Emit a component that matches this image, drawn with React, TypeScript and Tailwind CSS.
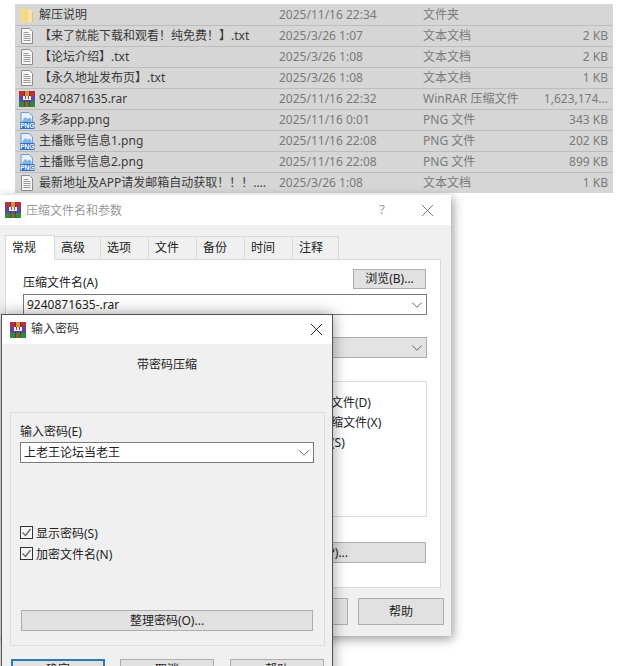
import { ChevronDown, X } from "lucide-react";

const FONT = { fontFamily: '"Noto Sans", "Noto Sans CJK SC", sans-serif' };

type Kind = "folder" | "txt" | "rar" | "png";

const files: { name: string; date: string; type: string; size: string; kind: Kind }[] = [
  { name: "解压说明", date: "2025/11/16 22:34", type: "文件夹", size: "", kind: "folder" },
  { name: "【来了就能下载和观看！纯免费！】.txt", date: "2025/3/26 1:07", type: "文本文档", size: "2 KB", kind: "txt" },
  { name: "【论坛介绍】.txt", date: "2025/3/26 1:08", type: "文本文档", size: "2 KB", kind: "txt" },
  { name: "【永久地址发布页】.txt", date: "2025/3/26 1:08", type: "文本文档", size: "1 KB", kind: "txt" },
  { name: "9240871635.rar", date: "2025/11/16 22:32", type: "WinRAR 压缩文件", size: "1,623,174...", kind: "rar" },
  { name: "多彩app.png", date: "2025/11/16 0:01", type: "PNG 文件", size: "343 KB", kind: "png" },
  { name: "主播账号信息1.png", date: "2025/11/16 22:08", type: "PNG 文件", size: "202 KB", kind: "png" },
  { name: "主播账号信息2.png", date: "2025/11/16 22:08", type: "PNG 文件", size: "899 KB", kind: "png" },
  { name: "最新地址及APP请发邮箱自动获取！！！....", date: "2025/3/26 1:08", type: "文本文档", size: "1 KB", kind: "txt" },
];

const tabs = [
  { label: "高级", w: "w-[47px]" },
  { label: "选项", w: "w-[49px]" },
  { label: "文件", w: "w-[49px]" },
  { label: "备份", w: "w-[49px]" },
  { label: "时间", w: "w-[49px]" },
  { label: "注释", w: "w-[47px]" },
];

const RarIcon = () => (
  <svg width="16" height="16" viewBox="0 0 16 16" className="shrink-0">
    <rect x="0" y="0" width="16" height="5" fill="#b8303a" />
    <rect x="0" y="5" width="16" height="6" fill="#5a48a8" />
    <rect x="0" y="11" width="16" height="5" fill="#2f8a3f" />
    <rect x="5" y="0" width="1" height="16" fill="#3a2a3a" opacity="0.5" />
    <rect x="10" y="0" width="1" height="16" fill="#3a2a3a" opacity="0.5" />
    <rect x="6" y="0" width="4" height="5" fill="#d9913c" />
    <rect x="4" y="5" width="8" height="4" fill="#f4ecdc" />
    <rect x="6" y="5" width="1" height="3" fill="#7a5a3c" />
    <rect x="9" y="5" width="1" height="3" fill="#7a5a3c" />
    <rect x="6" y="11" width="4" height="5" fill="#7a6a2c" />
  </svg>
);

const FileIcon = ({ kind }: { kind: Kind }) => {
  if (kind === "folder") {
    return (
      <svg width="16" height="16" viewBox="0 0 16 16" className="shrink-0">
        <path d="M1 1.500h7l1 1v13H1z" fill="#f3d98b" />
        <path d="M9 2.500h4.500v13H9z" fill="#f7e3a3" />
        <path d="M13 5h.8v10.500H13z" fill="#e2bd5c" />
      </svg>
    );
  }
  if (kind === "txt") {
    return (
      <svg width="14" height="16" viewBox="0 0 14 16" className="ml-px mr-px shrink-0">
        <path d="M1.500.5h8l3 3v12h-11z" fill="#f7f7f7" stroke="#8c8c8c" />
        <path d="M3.500 4.500h5M3.500 6.500h7M3.500 8.500h7M3.500 10.500h7M3.500 12.500h7" stroke="#9a9a9a" />
      </svg>
    );
  }
  if (kind === "rar") return <RarIcon />;
  return (
    <svg width="16" height="17" viewBox="0 0 16 17" className="shrink-0">
      <path d="M2 .5h8l3.500 3.500v8H2z" fill="#e8f1fb" stroke="#6d9bd2" />
      <path d="M3.500 8l3-3 2 2 2-1.500 2 2V11h-9z" fill="#7fb0e6" />
      <rect x="1" y="10" width="14.500" height="7" fill="#2f73c2" />
      <text x="8.200" y="16" fontSize="6.500" fontWeight="700" fill="#fff" textAnchor="middle" fontFamily="Liberation Sans">
        PNG
      </text>
    </svg>
  );
};

const Check = () => (
  <span className="flex h-[13px] w-[13px] shrink-0 items-center justify-center border border-[#333] bg-[#f4f4f4]">
    <svg width="11" height="11" viewBox="0 0 11 11">
      <path d="M1.500 5.500l3 3 5-6.500" fill="none" stroke="#666" strokeWidth="1.300" />
    </svg>
  </span>
);

const Btn = ({ label, className }: { label: string; className: string }) => (
  <div className={`flex items-center justify-center border-[1.5px] border-[#adadad] bg-[#e1e1e1] text-[12px] text-[#222] ${className}`}>
    {label}
  </div>
);

export default function App() {
  return (
    <div className="relative h-[666px] w-[627px] overflow-hidden bg-white" style={FONT}>
      {/* explorer list */}
      <div className="ml-[15px] mt-[4px] w-[598px] bg-[#d6d6d6]">
        {files.map((f) => (
          <div key={f.name} className="flex h-[21px] items-center border-t border-[#bdbdbd] text-[12px] first:border-t-transparent">
            <div className="flex w-[264px] items-center pl-[4px]">
              <FileIcon kind={f.kind} />
              <span className="ml-[4px] whitespace-nowrap text-[#3a3a3a]">{f.name}</span>
            </div>
            <div className="w-[144px] whitespace-nowrap text-[#7a7a7a]">{f.date}</div>
            <div className="w-[116px] whitespace-nowrap text-[#7a7a7a]">{f.type}</div>
            <div className="w-[69px] whitespace-nowrap text-right text-[#7a7a7a]">{f.size}</div>
          </div>
        ))}
      </div>

      {/* archive name and parameters window */}
      <div className="absolute left-[-2px] top-[195px] h-[441px] w-[453px] bg-[#f0f0f0] shadow-[2px_3px_10px_rgba(0,0,0,0.4)]">
        <div className="flex h-[30px] items-center bg-white pl-[7px] pr-[13px]">
          <RarIcon />
          <span className="ml-[5px] pt-[2px] text-[12px] text-[#999]">压缩文件名和参数</span>
          <span className="ml-auto mr-[32px] text-[13px] text-[#999]">?</span>
          <X size={21} strokeWidth={1.1} className="text-[#777]" />
        </div>
        <div className="ml-[7px] mt-[9px] flex h-[25px] items-end text-[12px] text-[#222]">
          <div className="z-10 -mb-px flex h-[25px] w-[50px] items-center border border-b-0 border-[#d9d9d9] bg-white pl-[6px]">常规</div>
          {tabs.map((t) => (
            <div key={t.label} className={`-ml-px flex h-[23px] items-center border border-b-0 border-[#d9d9d9] bg-[#f0f0f0] pl-[6px] ${t.w}`}>
              {t.label}
            </div>
          ))}
        </div>
        <div className="ml-[7px] h-[329px] w-[436px] border border-[#d9d9d9] bg-white pl-[17px] pr-[13px] pt-[9px]">
          <div className="flex h-[24px] items-start justify-between">
            <span className="pt-[5px] text-[12px] leading-[18px] text-[#222]">压缩文件名(A)</span>
            <Btn label="浏览(B)..." className="mr-px h-[20px] w-[73px]" />
          </div>
          <div className="mt-px flex h-[21px] items-center justify-between border border-[#7a7a7a] bg-white pl-[3px] text-[12px] text-[#222]">
            9240871635-.rar
            <ChevronDown size={18} strokeWidth={1.2} className="text-[#555]" />
          </div>
          <div className="mt-[22px] flex h-[21px] items-center justify-end border border-[#adadad] bg-[#e3e3e3]">
            <ChevronDown size={18} strokeWidth={1.2} className="text-[#555]" />
          </div>
          <div className="mt-[23px] flex h-[136px] flex-col gap-[2px] border border-[#dcdcdc] pl-[211px] pt-[12px] text-[12px] text-[#222]">
            <span className="h-[18px] whitespace-nowrap">压缩后删除原来的文件(D)</span>
            <span className="h-[18px] whitespace-nowrap">创建自解压格式压缩文件(X)</span>
            <span className="h-[18px] whitespace-nowrap">创建固实压缩文件(S)</span>
          </div>
          <Btn label="设置密码(P)..." className="ml-auto mr-px mt-[25px] h-[21px] w-[228px]" />
        </div>
        <div className="ml-[7px] mt-[10px] flex justify-end pr-[7px]">
          <Btn label="取消" className="h-[27px] w-[86px]" />
          <Btn label="帮助" className="ml-[10px] h-[27px] w-[86px]" />
        </div>
      </div>

      {/* password window */}
      <div className="absolute left-[1px] top-[314px] h-[380px] w-[332px] border border-[#555] bg-[#f0f0f0] shadow-[0_0_14px_rgba(0,0,0,0.4)]">
        <div className="flex h-[29px] items-center bg-white pl-[8px] pr-[5px]">
          <RarIcon />
          <span className="ml-[5px] pb-[2px] text-[12px] text-[#333]">输入密码</span>
          <X size={21} strokeWidth={1.1} className="ml-auto text-[#222]" />
        </div>
        <div className="flex h-[40px] items-center justify-center pt-[2px] text-[12px] text-[#222]">带密码压缩</div>
        <div className="ml-[8px] mt-[28px] h-[234px] w-[315px] border border-[#dcdcdc] pl-[9px] pr-[10px] pt-[9px] text-[12px] text-[#222]">
          <div className="h-[20px] leading-[20px]">输入密码(E)</div>
          <div className="flex h-[21px] items-center justify-between border border-[#7a7a7a] bg-white pl-[3px] text-[12px]">
            上老王论坛当老王
            <ChevronDown size={18} strokeWidth={1.2} className="text-[#555]" />
          </div>
          <div className="mt-[63px] flex h-[13px] items-center gap-[3px]">
            <Check />
            <span className="whitespace-nowrap pt-[2px]">显示密码(S)</span>
          </div>
          <div className="mt-[8px] flex h-[13px] items-center gap-[3px]">
            <Check />
            <span className="whitespace-nowrap pt-[2px]">加密文件名(N)</span>
          </div>
          <Btn label="整理密码(O)..." className="ml-px mt-[50px] h-[21px] w-[292px]" />
        </div>
        <div className="ml-[9px] mt-[13px] flex text-[12px]">
          <div className="flex h-[22px] w-[94px] items-center justify-center border-2 border-[#2a7ab5] bg-[#e1e1e1] text-[#222]">确定</div>
          <Btn label="取消" className="ml-[15px] h-[22px] w-[94px]" />
          <Btn label="帮助" className="ml-[16px] h-[22px] w-[94px]" />
        </div>
      </div>
    </div>
  );
}
